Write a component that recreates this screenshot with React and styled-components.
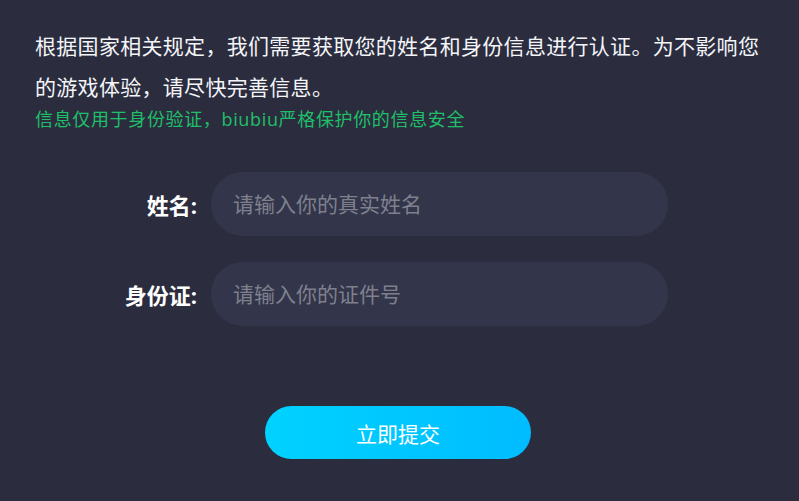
import React from 'react';
import styled, { createGlobalStyle } from 'styled-components';

const GlobalStyle = createGlobalStyle`
  html, body {
    margin: 0;
    padding: 0;
    background: #2b2d3f;
  }
  body {
    font-family: "Open Sans", "Noto Sans CJK SC", sans-serif;
  }
`

const Page = styled.div`
  width: 799px;
  height: 501px;
  box-sizing: border-box;
  padding: 26px 35px 0 35px;
  background: #2b2d3f;
  color: #ffffff;
`
const Notice = styled.p`
  margin: 0;
  font-size: 21px;
  line-height: 41px;
  letter-spacing: 0.3px;
  color: #f4f5f8;
`
const SafeTip = styled.p`
  margin: 0;
  font-size: 18px;
  line-height: 22px;
  letter-spacing: 0.65px;
  color: #1fbf69;
`
const Form = styled.form`
  display: grid;
  grid-template-columns: 88px 457px;
  column-gap: 14px;
  row-gap: 26px;
  justify-content: center;
  align-items: center;
  margin-top: 42px;
  padding-right: 22px;
`
const Label = styled.label`
  justify-self: end;
  white-space: nowrap;
  font-size: 22px;
  font-weight: 700;
  color: #ffffff;
`
const Field = styled.input`
  height: 64px;
  box-sizing: border-box;
  border: none;
  outline: none;
  border-radius: 32px;
  padding: 0 22px;
  background: #33354a;
  color: #ffffff;
  font-family: inherit;
  font-size: 21px;

  &::placeholder {
    color: #7e808e;
  }
`
const Actions = styled.div`
  display: flex;
  justify-content: center;
  margin-top: 80px;
  padding-right: 3px;
`
const SubmitButton = styled.button`
  width: 266px;
  height: 53px;
  border: none;
  border-radius: 27px;
  background: linear-gradient(90deg, #00d2ff 0%, #00bcff 100%);
  color: #ffffff;
  font-family: inherit;
  font-size: 21px;
  cursor: pointer;
`

const App = () => (
  <Page>
    <GlobalStyle />
    <Notice>根据国家相关规定，我们需要获取您的姓名和身份信息进行认证。为不影响您的游戏体验，请尽快完善信息。</Notice>
    <SafeTip>信息仅用于身份验证，biubiu严格保护你的信息安全</SafeTip>
    <Form onSubmit={e => e.preventDefault()}>
      <Label htmlFor="realName">姓名:</Label>
      <Field id="realName" placeholder="请输入你的真实姓名" />
      <Label htmlFor="idCard">身份证:</Label>
      <Field id="idCard" placeholder="请输入你的证件号" />
    </Form>
    <Actions>
      <SubmitButton type="button">立即提交</SubmitButton>
    </Actions>
  </Page>
);

export default App;
